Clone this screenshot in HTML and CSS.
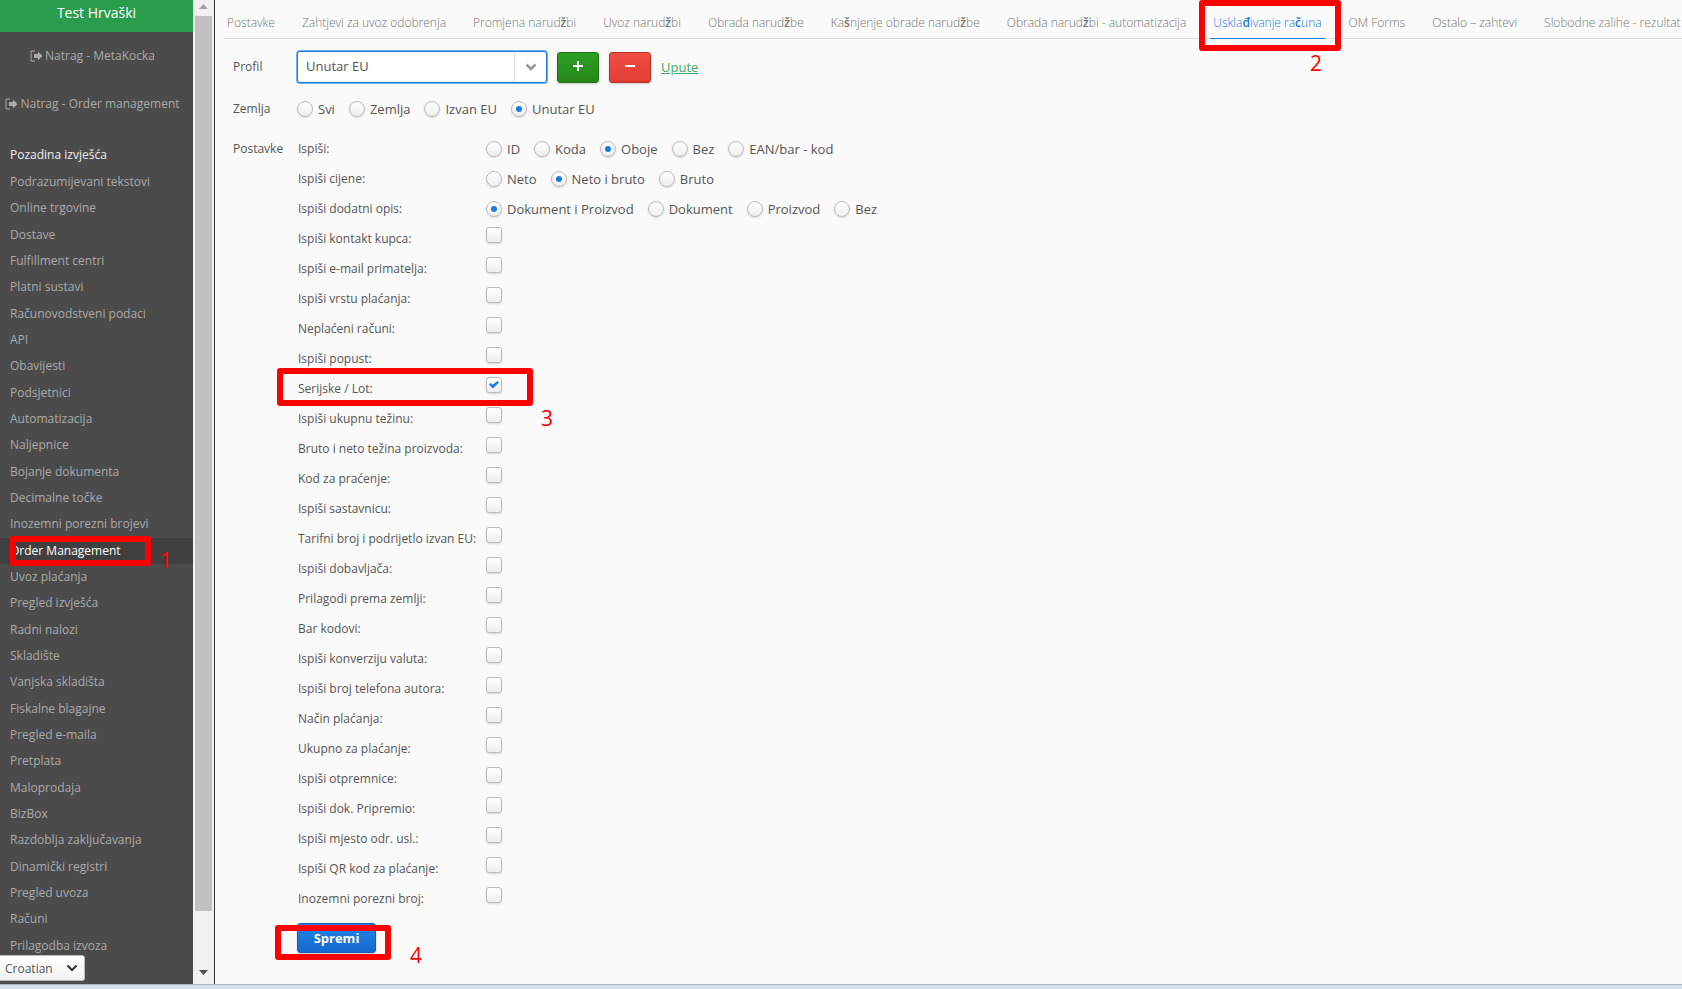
FILE: index.html
```html
<!DOCTYPE html>
<html lang="hr">
<head>
<meta charset="utf-8">
<title>Order Management</title>
<link rel="stylesheet" href="styles.css">
</head>
<body>
<div class="app">
<aside class="sidebar">
<div class="brand">Test Hrvaški</div>
<a class="back" href="#"><svg class="exit" viewBox="0 0 13 12"><path d="M5 1H1v10h4" fill="none" stroke="currentColor"/><path d="M4 4h4V1.500L12.500 6 8 10.500V8H4z" fill="currentColor"/></svg>Natrag - MetaKocka</a>
<a class="back" href="#"><svg class="exit" viewBox="0 0 13 12"><path d="M5 1H1v10h4" fill="none" stroke="currentColor"/><path d="M4 4h4V1.500L12.500 6 8 10.500V8H4z" fill="currentColor"/></svg>Natrag - Order management</a>
<h2 class="group">Pozadina izvješća</h2>
<nav class="menu">
<a href="#">Podrazumijevani tekstovi</a><a href="#">Online trgovine</a><a href="#">Dostave</a><a href="#">Fulfillment centri</a><a href="#">Platni sustavi</a><a href="#">Računovodstveni podaci</a><a href="#">API</a><a href="#">Obavijesti</a><a href="#">Podsjetnici</a><a href="#">Automatizacija</a><a href="#">Naljepnice</a><a href="#">Bojanje dokumenta</a><a href="#">Decimalne točke</a><a href="#">Inozemni porezni brojevi</a><a href="#" class="current">Order Management</a><a href="#">Uvoz plaćanja</a><a href="#">Pregled izvješća</a><a href="#">Radni nalozi</a><a href="#">Skladište</a><a href="#">Vanjska skladišta</a><a href="#">Fiskalne blagajne</a><a href="#">Pregled e-maila</a><a href="#">Pretplata</a><a href="#">Maloprodaja</a><a href="#">BizBox</a><a href="#">Razdoblja zaključavanja</a><a href="#">Dinamički registri</a><a href="#">Pregled uvoza</a><a href="#">Računi</a><a href="#">Prilagodba izvoza</a>
</nav>
</aside>
<div class="scrollbar"><svg class="arrow up" viewBox="0 0 9 5"><path d="M0 5L4.500 0 9 5z"/></svg><div class="thumb"></div><svg class="arrow down" viewBox="0 0 9 5"><path d="M0 0L4.500 5 9 0z"/></svg></div>
<main class="main">
<nav class="tabs">
<a href="#">Postavke</a><a href="#">Zahtjevi za uvoz odobrenja</a><a href="#">Promjena narud<span>ž</span>bi</a><a href="#">Uvoz narud<span>ž</span>bi</a><a href="#">Obrada narud<span>ž</span>be</a><a href="#">Ka<span>š</span>njenje obrade narud<span>ž</span>be</a><a href="#">Obrada narud<span>ž</span>bi - automatizacija</a><a href="#" class="active">Uskla<span>đ</span>ivanje ra<span>č</span>una</a><a href="#">OM Forms</a><a href="#">Ostalo – zahtevi</a><a href="#">Slobodne zalihe - rezultat</a>
</nav>
<form class="form">
<div class="line profile"><label class="name" for="profil">Profil</label>
<div class="combo"><select id="profil"><option>Unutar EU</option></select><span class="drop"><svg viewBox="0 0 12 8"><path d="M1.500 1.500L6 6l4.500-4.500" fill="none" stroke="#999" stroke-width="2.500"/></svg></span></div>
<button type="button" class="btn add" aria-label="Dodaj"><svg viewBox="0 0 12 12"><path d="M6 1v10M1 6h10" stroke="#fff" stroke-width="2"/></svg></button>
<button type="button" class="btn remove" aria-label="Ukloni"><svg viewBox="0 0 12 12"><path d="M1 6h10" stroke="#fff" stroke-width="2"/></svg></button>
<a class="help" href="#">Upute</a></div>
<div class="line country"><span class="name">Zemlja</span><div class="radios">
<label><input type="radio" name="z">Svi</label><label><input type="radio" name="z">Zemlja</label><label><input type="radio" name="z">Izvan EU</label><label><input type="radio" name="z" checked>Unutar EU</label></div></div>
<div class="line settings"><span class="name">Postavke</span>
<div class="options">
<div class="row"><span>Ispiši:</span><div class="radios"><label><input type="radio" name="a">ID</label><label><input type="radio" name="a">Koda</label><label><input type="radio" name="a" checked>Oboje</label><label><input type="radio" name="a">Bez</label><label><input type="radio" name="a">EAN/bar - kod</label></div></div>
<div class="row"><span>Ispiši cijene:</span><div class="radios"><label><input type="radio" name="b">Neto</label><label><input type="radio" name="b" checked>Neto i bruto</label><label><input type="radio" name="b">Bruto</label></div></div>
<div class="row"><span>Ispiši dodatni opis:</span><div class="radios"><label><input type="radio" name="c" checked>Dokument i Proizvod</label><label><input type="radio" name="c">Dokument</label><label><input type="radio" name="c">Proizvod</label><label><input type="radio" name="c">Bez</label></div></div>
<label class="row check"><span>Ispiši kontakt kupca:</span><input type="checkbox"></label>
<label class="row check"><span>Ispiši e-mail primatelja:</span><input type="checkbox"></label>
<label class="row check"><span>Ispiši vrstu plaćanja:</span><input type="checkbox"></label>
<label class="row check"><span>Neplaćeni računi:</span><input type="checkbox"></label>
<label class="row check"><span>Ispiši popust:</span><input type="checkbox"></label>
<label class="row check"><span>Serijske / Lot:</span><input type="checkbox" checked></label>
<label class="row check"><span>Ispiši ukupnu težinu:</span><input type="checkbox"></label>
<label class="row check"><span>Bruto i neto težina proizvoda:</span><input type="checkbox"></label>
<label class="row check"><span>Kod za praćenje:</span><input type="checkbox"></label>
<label class="row check"><span>Ispiši sastavnicu:</span><input type="checkbox"></label>
<label class="row check"><span>Tarifni broj i podrijetlo izvan EU:</span><input type="checkbox"></label>
<label class="row check"><span>Ispiši dobavljača:</span><input type="checkbox"></label>
<label class="row check"><span>Prilagodi prema zemlji:</span><input type="checkbox"></label>
<label class="row check"><span>Bar kodovi:</span><input type="checkbox"></label>
<label class="row check"><span>Ispiši konverziju valuta:</span><input type="checkbox"></label>
<label class="row check"><span>Ispiši broj telefona autora:</span><input type="checkbox"></label>
<label class="row check"><span>Način plaćanja:</span><input type="checkbox"></label>
<label class="row check"><span>Ukupno za plaćanje:</span><input type="checkbox"></label>
<label class="row check"><span>Ispiši otpremnice:</span><input type="checkbox"></label>
<label class="row check"><span>Ispiši dok. Pripremio:</span><input type="checkbox"></label>
<label class="row check"><span>Ispiši mjesto odr. usl.:</span><input type="checkbox"></label>
<label class="row check"><span>Ispiši QR kod za plaćanje:</span><input type="checkbox"></label>
<label class="row check"><span>Inozemni porezni broj:</span><input type="checkbox"></label>
<button type="button" class="btn save">Spremi</button>
</div></div>
</form>
</main>
</div>
<footer class="statusbar"></footer>
<div class="language"><select aria-label="Jezik"><option>Croatian</option></select><svg viewBox="0 0 12 8"><path d="M1.500 1.500L6 6l4.500-4.500" fill="none" stroke="#333" stroke-width="2"/></svg></div>
<div class="mark mark-menu"></div><span class="num num-menu">1</span>
<div class="mark mark-tab"></div><span class="num num-tab">2</span>
<div class="mark mark-lot"></div><span class="num num-lot">3</span>
<div class="mark mark-save"></div><span class="num num-save">4</span>
</body>
</html>
```
FILE: styles.css
```css
* { box-sizing: border-box; }
body { margin: 0; height: 100vh; display: flex; flex-direction: column; overflow: hidden; position: relative; background: #fafafa; color: #555; font: 12px/18px "Open Sans", sans-serif; }
a { text-decoration: none; color: inherit; }
.app { flex: 1; min-height: 0; display: flex; }
.sidebar { width: 193px; flex: none; display: flex; flex-direction: column; background: #4b4b4b; color: #aaa; }
.brand { height: 32px; flex: none; background: #2a9c4d; color: #fff; text-align: center; font-size: 14px; line-height: 26px; }
.back { display: flex; justify-content: center; align-items: center; gap: 2px; height: 47px; flex: none; padding-right: 8px; white-space: nowrap; }
.brand + .back { height: 48px; }
.exit { width: 13px; height: 12px; flex: none; }
.group { margin: 19px 0 5px; padding-left: 10px; font-size: 12px; line-height: 18px; font-weight: 400; color: #eee; }
.menu { flex: 1; min-height: 0; display: grid; grid-auto-rows: 1fr; padding-bottom: 25px; }
.menu a { display: flex; align-items: center; padding-left: 10px; min-height: 0; white-space: nowrap; }
.menu .current { background: #404040; color: #fff; }
.scrollbar { width: 22px; flex: none; display: flex; flex-direction: column; align-items: center; background: #f1f1f1; border-right: 1px solid #333; padding: 4px 2px 9px; }
.arrow { width: 9px; height: 5px; flex: none; fill: #a3a3a3; }
.thumb { width: 17px; flex: 1; margin: 7px 0 59px; background: #c1c1c1; }
.down { fill: #505050; }
.main { flex: 1; min-width: 0; padding-left: 9px; overflow: hidden; }
.tabs { display: flex; gap: 15px; height: 39px; border-bottom: 1px solid #dcdcdc; white-space: nowrap; font-weight: 300; color: #777; }
.tabs a { padding: 14px 3px 0; height: 39px; margin-right: 6px; font-size: 12px; line-height: 18px; }
.tabs span { font-weight: 600; }
.tabs .active { color: #1a7be6; border-bottom: 1px solid #1a7be6; }
.form { padding: 12px 0 0 9px; }
.line { display: grid; grid-template-columns: 64px 1fr; align-items: center; }
.profile { grid-template-columns: 54px 250px 42px 42px 1fr; gap: 0 10px; height: 32px; }
.combo { position: relative; height: 32px; }
.combo select { appearance: none; width: 100%; height: 32px; border: 1px solid #1a7be6; border-radius: 3px; box-shadow: 0 0 0 1px #72aff2; background: #fff; padding: 0 8px 2px; font: 13px "Open Sans", sans-serif; color: #555; }
.drop { position: absolute; right: 1px; top: 1px; bottom: 1px; width: 32px; border-left: 1px solid #ddd; display: grid; place-items: center; pointer-events: none; }
.drop svg { width: 12px; height: 8px; }
.btn { display: grid; place-items: center; border-radius: 3px; border: 1px solid; padding: 0 0 2px; height: 31px; box-shadow: 0 1px 2px #0003; color: #fff; }
.btn svg { width: 12px; height: 12px; }
.add { background: linear-gradient(#2c9d24, #278719); border-color: #207313; }
.remove { background: linear-gradient(#f14e43, #e23d33); border-color: #b9332b; }
.help { font-size: 13px; color: #42a962; text-decoration: underline; }
.country { margin-top: 17px; height: 18px; }
.radios { display: flex; gap: 14px; padding-bottom: 1px; white-space: nowrap; font-size: 13px; line-height: 16px; }
.radios label { display: flex; align-items: center; gap: 5px; }
input { appearance: none; margin: 0; width: 16px; height: 16px; flex: none; border: 1px solid #bbb; background: linear-gradient(#fff, #eee); box-shadow: 0 1px 2px #0002; display: grid; place-items: center; }
input[type=radio] { border-radius: 50%; }
input[type=radio]:checked::before { content: ""; width: 6px; height: 6px; border-radius: 50%; background: #1a7be6; }
input[type=checkbox] { border-radius: 3px; }
input[type=checkbox]:checked::before { content: ""; width: 10px; height: 8px; background: #1a7be6; clip-path: polygon(0 45%, 18% 25%, 38% 48%, 82% 0, 100% 20%, 40% 95%); }
.settings { margin-top: 16px; align-items: start; line-height: 30px; }
.options { padding-left: 1px; }
.row { display: grid; grid-template-columns: 188px 1fr; align-items: center; height: 30px; line-height: 18px; }
.check input { margin-bottom: 8px; }
.save { margin: 9px 0 0 -1px; width: 79px; height: 30px; padding: 0; font: 700 13px "Open Sans", sans-serif; background: linear-gradient(#2385ea, #1469cf); border-color: #125fb9; }
.statusbar { height: 5px; flex: none; border-top: 1px solid #a9b3bc; background: #d5e1ed; }
.language { position: absolute; left: 0; bottom: 8px; width: 85px; height: 26px; }
.language select { appearance: none; width: 100%; height: 100%; border: 1px solid #bbb; border-left: 0; border-radius: 0 3px 3px 0; background: linear-gradient(#fff, #f1f1f1); padding: 0 5px; font: 12px "Open Sans", sans-serif; color: #555; }
.language svg { position: absolute; right: 7px; top: 9px; width: 12px; height: 8px; pointer-events: none; }
.mark { position: absolute; border: 6px solid #f00; border-radius: 3px; pointer-events: none; }
.num { position: absolute; color: #f00; font-size: 21px; line-height: 24px; }
.mark-menu { left: 10px; top: 536px; width: 141px; height: 30px; }
.num-menu { left: 160px; top: 548px; }
.mark-tab { left: 1199px; top: 0; width: 142px; height: 51px; }
.num-tab { left: 1310px; top: 51px; }
.mark-lot { left: 277px; top: 368px; width: 256px; height: 38px; }
.num-lot { left: 541px; top: 406px; }
.mark-save { left: 275px; top: 925px; width: 116px; height: 35px; }
.num-save { left: 410px; top: 943px; }
```
